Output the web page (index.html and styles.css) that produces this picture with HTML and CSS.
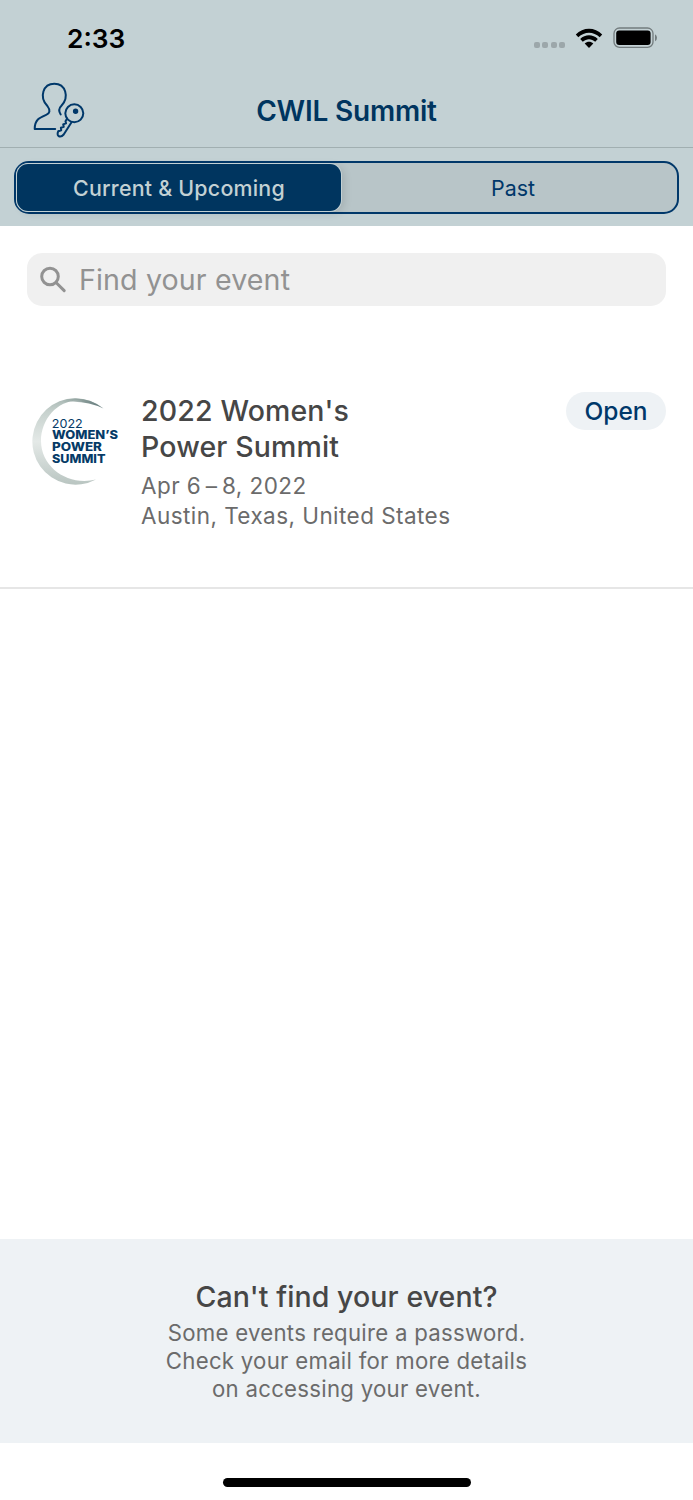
FILE: index.html
```html
<!DOCTYPE html>
<html lang="en">
<head>
<meta charset="utf-8">
<title>CWIL Summit</title>
<link rel="stylesheet" href="styles.css">
</head>
<body>
<header class="header">
  <div class="status">
    <span class="time">2:33</span>
    <div class="indicators">
      <span class="dots"><i></i><i></i><i></i><i></i></span>
      <svg class="wifi" width="28" height="21" viewBox="0 0 28 21">
        <path d="M.8 6.6C8 -1.3 20 -1.3 27.2 6.6L24.7 9.2C18.6 3.1 9.4 3.1 3.3 9.2Z"/>
        <path d="M5.2 11.1C10.1 6.1 17.9 6.1 22.8 11.1L20.2 13.7C16.6 10.3 11.4 10.3 7.8 13.7Z"/>
        <path d="M9.7 15.5C12.2 13.3 15.8 13.3 18.3 15.5L14 20Z"/>
      </svg>
      <svg class="battery" width="46" height="22" viewBox="0 0 46 22">
        <rect x="1" y="1" width="39" height="19.4" rx="5.5" fill="none" stroke="#737c7e" stroke-width="1.3"/>
        <rect x="3.2" y="3.6" width="34.4" height="14.4" rx="3"/>
        <path d="M42 7.2Q44 8.2 44 10.7T42 14.2Z" fill="#737c7e"/>
      </svg>
    </div>
  </div>
  <nav class="navbar">
    <svg class="account" width="54" height="58" viewBox="0 0 54 58">
      <path d="M28.7 34.5C26.5 31.2 27 28.2 29.2 26C37.8 17 33.5 3.7 22.3 3.7S6.8 17 15.4 26C18.8 30.5 17.6 33.2 14.5 34.7C8 37.5 2.7 39.3 2.7 49H23.2"/>
      <circle cx="42.3" cy="33.3" r="9"/>
      <circle class="key-hole" cx="43.6" cy="31.2" r="1.7"/>
      <path d="M35 38.7L33.5 41.3L34 43.3L31.2 44.4L31.7 46.8L28.9 47.8L29.2 50.2L26.2 51.3Q24.9 54.7 26.5 56Q29.3 57.3 31.7 54.5L39.7 42"/>
    </svg>
    <h1 class="nav-title">CWIL Summit</h1>
  </nav>
  <div class="segments-bar">
    <div class="segments">
      <button class="segment selected">Current &amp; Upcoming</button>
      <button class="segment past">Past</button>
    </div>
  </div>
</header>
<main class="main">
  <div class="search">
    <svg width="28" height="28" viewBox="0 0 28 28"><circle cx="10" cy="10.5" r="8.3"/><path d="M16.5 17L24.2 24.6"/></svg>
    <span class="placeholder">Find your event</span>
  </div>
  <article class="event">
    <svg class="logo" width="92" height="92" viewBox="0 0 92 92">
      <defs>
        <linearGradient id="ring" x1="0" y1="0" x2="0" y2="1">
          <stop offset="0" stop-color="#a9b8b4"/><stop offset=".15" stop-color="#c6d1cd"/><stop offset=".5" stop-color="#e4e9e7"/><stop offset=".8" stop-color="#cbd4d1"/><stop offset="1" stop-color="#b9c5c1"/>
        </linearGradient>
        <linearGradient id="tip" x1="0" y1="0" x2="1" y2="0">
          <stop offset="0" stop-color="#8b9d9a" stop-opacity="0"/><stop offset=".5" stop-color="#8b9d9a"/><stop offset="1" stop-color="#5d7476"/>
        </linearGradient>
      </defs>
      <path fill="url(#ring)" d="M72.5 12.5A43.2 43.2 0 1 0 65 83.5C38 90.5 10 72 10 45C10 16 39 -9 72.5 12.5Z"/>
      <path fill="url(#tip)" d="M31 4.4Q54 -2 72.5 12.5Q53 3.2 31 6.6Z"/>
      <g fill="#063b67">
        <text class="logo-year" x="20.8" y="31.6" textLength="31" lengthAdjust="spacingAndGlyphs">2022</text>
        <text class="logo-name" x="21" y="43" textLength="66" lengthAdjust="spacingAndGlyphs">WOMEN’S</text>
        <text class="logo-name" x="21" y="55" textLength="50" lengthAdjust="spacingAndGlyphs">POWER</text>
        <text class="logo-name" x="21" y="67" textLength="53.5" lengthAdjust="spacingAndGlyphs">SUMMIT</text>
      </g>
    </svg>
    <div class="details">
      <h2 class="event-title">2022 Women's<br>Power Summit</h2>
      <p class="meta">Apr 6&#8201;–&#8201;8, 2022<br>Austin, Texas, United States</p>
    </div>
    <button class="open">Open</button>
  </article>
</main>
<footer class="help">
  <h2 class="help-title">Can't find your event?</h2>
  <p class="help-text">Some events require a password.<br>Check your email for more details<br>on accessing your event.</p>
</footer>
<div class="home"><div class="home-bar"></div></div>
</body>
</html>
```
FILE: styles.css
```css
* { box-sizing: border-box; }
body {
  margin: 0; width: 693px; height: 1500px; overflow: hidden;
  display: flex; flex-direction: column;
  background: #fff; font-family: Inter, "Liberation Sans", sans-serif;
}
h1, h2, p { margin: 0; font-weight: 500; }
button { border: 0; padding: 0; margin: 0; background: none; font-family: inherit; }
svg { display: block; flex: none; }

.header { height: 226px; background: #c3d1d4; color: #00355f; }
.status { height: 76px; display: flex; justify-content: space-between; padding: 0 34px 0 67px; }
.time { font-size: 26.3px; line-height: 78px; font-weight: 600; color: #000; }
.indicators { display: flex; height: 76px; align-items: center; }
.dots { display: flex; gap: 2.4px; margin: 14px 10px 0 0; }
.dots i { width: 6px; height: 6px; border-radius: 2px; background: #9ca7aa; }
.wifi { margin-right: 10px; }

.navbar { height: 72px; border-bottom: 1px solid #a1afb1; display: grid; grid-template-columns: 1fr auto 1fr; }
.account { margin: 4px 0 0 32px; fill: none; stroke: #00386a; stroke-width: 2; stroke-linecap: round; stroke-linejoin: round; }
.key-hole { fill: #00386a; }
.nav-title { font-size: 28px; line-height: 70px; font-weight: 600; letter-spacing: -.2px; white-space: nowrap; }

.segments-bar { padding: 13px 14px 0; }
.segments {
  height: 53px; display: grid; grid-template-columns: 324px 1fr; gap: 6px;
  padding: 1px; border: 2px solid #00386a; border-radius: 15px; background: #b8c5c8;
}
.segment { padding-top: 1px; color: #00386a; font-size: 21.4px; line-height: 46px; white-space: nowrap; }
.past { padding-left: 3px; }
.selected { background: #00355f; color: #c3d1d4; border-radius: 11px; font-weight: 500; letter-spacing: .22px; box-shadow: 0 0 0 1px #c3d1d4, 3px 2px 8px rgba(0,0,0,.12); }

.main { flex: 1; }
.search {
  margin: 27px 27px 0; height: 53px; border-radius: 15px; background: #f0f0f0;
  display: flex; align-items: center; padding-left: 13px; gap: 11px;
}
.search svg { fill: none; stroke: #929292; stroke-width: 3; stroke-linecap: round; }
.placeholder { font-size: 28.6px; line-height: 54px; letter-spacing: .13px; color: #929292; white-space: nowrap; }

.event { display: flex; height: 283px; padding: 86px 27px 0 31px; border-bottom: 2px solid #e6e6e6; }
.logo { margin-top: 4px; }
.logo-year { font-size: 11.8px; font-weight: 400; }
.logo-name { font-size: 11.6px; font-weight: 800; }
.details { flex: 1; padding: 1px 0 0 18px; white-space: nowrap; }
.event-title { font-size: 28.5px; line-height: 36px; letter-spacing: .14px; color: #464646; }
.meta { margin-top: 6px; font-size: 22.5px; line-height: 30px; letter-spacing: .44px; font-weight: 400; color: #6b6b6b; }
.open { width: 100px; height: 38px; border-radius: 19px; background: #eef2f5; color: #00386a; font-size: 24.5px; line-height: 38px; font-weight: 500; }

.help { height: 204px; padding-top: 40px; background: #eef2f5; text-align: center; white-space: nowrap; }
.help-title { font-size: 28.5px; line-height: 36px; letter-spacing: .09px; color: #464646; }
.help-text { margin-top: 4px; font-size: 22.2px; line-height: 28px; letter-spacing: .27px; font-weight: 400; color: #6b6b6b; }
.home { height: 57px; padding-top: 35px; }
.home-bar { width: 248px; height: 9px; margin: 0 auto; border-radius: 5px; background: #000; }
```
